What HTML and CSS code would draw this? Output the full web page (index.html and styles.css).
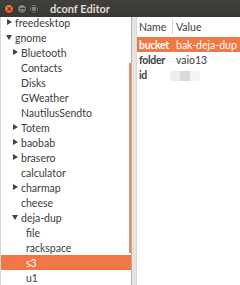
FILE: index.html
```html
<!DOCTYPE html>
<html lang="en">
<head>
  <meta charset="UTF-8">
  <title>dconf Editor</title>
  <link rel="stylesheet" href="styles.css">
</head>
<body>

  <div class="window">
    <div class="titlebar">
      <span class="wbtn close"><span class="x">×</span></span>
      <span class="wbtn min"><span class="dash"></span></span>
      <span class="wbtn max"><span class="box"></span></span>
      <span class="title">dconf Editor</span>
    </div>

    <div class="main">
      <div class="tree-pane">
        <ul class="tree">
          <li class="row l1"><span class="exp closed"></span>freedesktop</li>
          <li class="row l1"><span class="exp open"></span>gnome</li>
          <li class="row l2"><span class="exp closed"></span>Bluetooth</li>
          <li class="row l2"><span class="exp"></span>Contacts</li>
          <li class="row l2"><span class="exp"></span>Disks</li>
          <li class="row l2"><span class="exp"></span>GWeather</li>
          <li class="row l2"><span class="exp"></span>NautilusSendto</li>
          <li class="row l2"><span class="exp closed"></span>Totem</li>
          <li class="row l2"><span class="exp closed"></span>baobab</li>
          <li class="row l2"><span class="exp closed"></span>brasero</li>
          <li class="row l2"><span class="exp"></span>calculator</li>
          <li class="row l2"><span class="exp closed"></span>charmap</li>
          <li class="row l2"><span class="exp"></span>cheese</li>
          <li class="row l2"><span class="exp open"></span>deja-dup</li>
          <li class="row l3"><span class="exp"></span>file</li>
          <li class="row l3"><span class="exp"></span>rackspace</li>
          <li class="row l3 selected"><span class="exp"></span>s3</li>
          <li class="row l3"><span class="exp"></span>u1</li>
        </ul>
        <div class="thumb"></div>
      </div>

      <div class="handle"></div>

      <div class="keys-pane">
        <div class="keys-head">
          <span class="col-name">Name</span>
          <span class="col-value">Value</span>
        </div>
        <div class="key selected">
          <span class="col-name">bucket</span>
          <span class="col-value">bak-deja-dup</span>
        </div>
        <div class="key">
          <span class="col-name">folder</span>
          <span class="col-value">vaio13</span>
        </div>
        <div class="key">
          <span class="col-name">id</span>
          <span class="col-value"><span class="blurred"></span></span>
        </div>
      </div>
    </div>
  </div>

</body>
</html>
```

FILE: styles.css
```css
html, body {
  margin: 0;
  padding: 0;
}
body {
  width: 240px;
  height: 285px;
  overflow: hidden;
  font-family: Lato, "DejaVu Sans", sans-serif;
  font-size: 10.5px;
  color: #3c3c3c;
}
.window {
  display: flex;
  flex-direction: column;
  height: 285px;
  background: #fff;
}

/* title bar */
.titlebar {
  height: 17px;
  flex: none;
  display: flex;
  align-items: center;
  padding-left: 4px;
  background: linear-gradient(#403f3b, #393834);
}
.wbtn {
  width: 10px;
  height: 10px;
  border-radius: 50%;
  margin-right: 2px;
  box-sizing: border-box;
  display: flex;
  align-items: center;
  justify-content: center;
  background: linear-gradient(#8c8b85, #6c6b66);
  border: 1px solid #34332f;
}
.wbtn.close {
  background: linear-gradient(#f58a5c, #e0562a);
  border-color: #4a2a1e;
}
.wbtn.min { margin-left: 1px; }
.wbtn .x {
  font-size: 9px;
  line-height: 8px;
  font-weight: bold;
  color: #4a2b20;
}
.wbtn .dash {
  width: 5px;
  height: 1px;
  background: #3c3b37;
}
.wbtn .box {
  width: 4px;
  height: 4px;
  border: 1px solid #3c3b37;
}
.title {
  margin-left: 9px;
  color: #dfdbd2;
  font-weight: bold;
  font-size: 11px;
}

/* panes */
.main {
  flex: 1;
  display: flex;
  min-height: 0;
}
.tree-pane {
  position: relative;
  width: 130px;
  flex: none;
  overflow: hidden;
  border-left: 1px solid #d6d4d0;
  border-right: 1px solid #b6b4b0;
}
.tree {
  list-style: none;
  margin: -2px 0 0;
  padding: 0;
}
.row {
  height: 15px;
  display: flex;
  align-items: center;
  white-space: nowrap;
}
.row.l1 { padding-left: 5px; }
.row.l2 { padding-left: 11px; }
.row.l3 { padding-left: 16px; }
.row.selected {
  margin-left: -1px;
  padding-left: 17px;
  background: #f07746;
  color: #fff;
}
.exp {
  width: 9px;
  height: 7px;
  flex: none;
  position: relative;
}
.exp.closed::before {
  content: "";
  position: absolute;
  left: 1px;
  top: 0;
  border-left: 5px solid #444;
  border-top: 3.5px solid transparent;
  border-bottom: 3.5px solid transparent;
}
.exp.open::before {
  content: "";
  position: absolute;
  left: 0;
  top: 1px;
  border-top: 5px solid #444;
  border-left: 3.5px solid transparent;
  border-right: 3.5px solid transparent;
}
.thumb {
  position: absolute;
  right: 0;
  top: 46px;
  width: 2px;
  height: 190px;
  background: linear-gradient(90deg, #f39a72, #ee7745);
}
.handle {
  width: 4px;
  flex: none;
  background: #e6e4e0;
}

/* keys list */
.keys-pane {
  flex: 1;
  border-left: 1px solid #dcdad6;
}
.keys-head,
.key {
  display: flex;
  align-items: center;
  white-space: nowrap;
}
.keys-head {
  height: 20px;
}
.key {
  height: 15px;
}
.col-name {
  width: 33px;
  padding-left: 2px;
  flex: none;
}
.col-value {
  padding-left: 4px;
}
.keys-head .col-value {
  border-left: 1px solid #d4d2ce;
  line-height: 14px;
  padding-left: 3px;
}
.key .col-name {
  font-weight: bold;
  letter-spacing: -0.3px;
}
.key.selected {
  background: #f07746;
  color: #fff;
}
.blurred {
  display: inline-block;
  width: 30px;
  height: 10px;
  margin-left: -6px;
  vertical-align: middle;
  background: linear-gradient(90deg, #ededed 0 10px, #d9d9d9 10px 20px, #f3f3f3 20px 30px);
}
```
